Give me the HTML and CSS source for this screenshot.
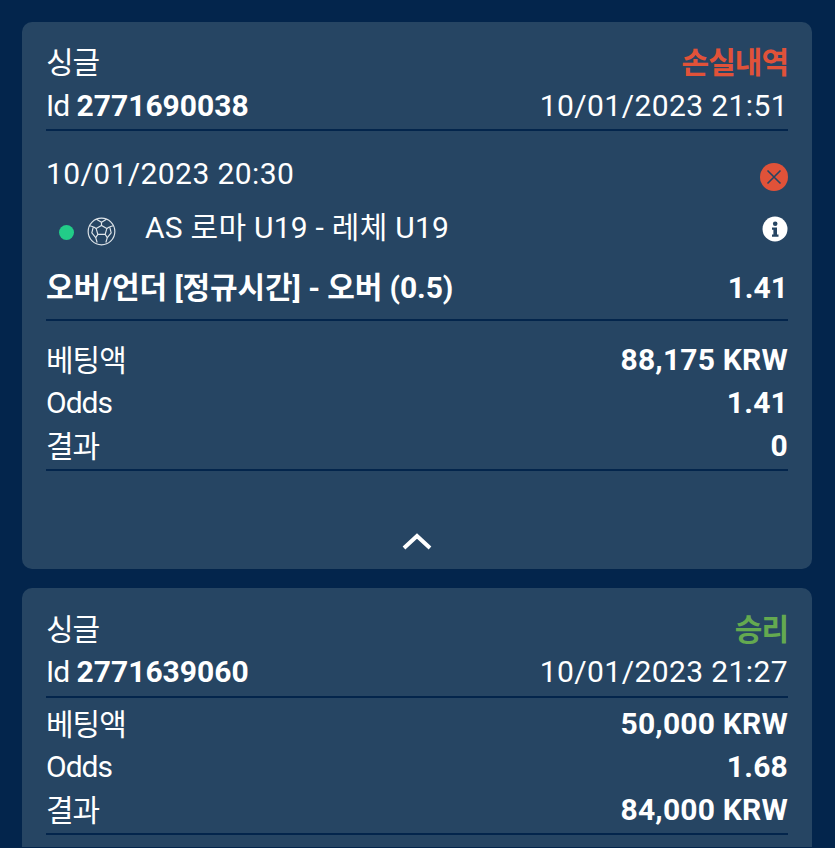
FILE: index.html
```html
<!DOCTYPE html>
<html lang="ko">
<head>
  <meta charset="UTF-8">
  <meta name="viewport" content="width=device-width, initial-scale=1.0">
  <title>Bets</title>
  <link rel="stylesheet" href="styles.css">
</head>
<body>
<div class="card">
  <div class="row head-row top">
    <span class="ko">싱글</span>
    <strong class="lost ko">손실내역</strong>
  </div>
  <div class="row head-row">
    <span><span class="tight">Id</span> <strong>2771690038</strong></span>
    <span class="date">10/01/2023 21:51</span>
  </div>
  <div class="line"></div>

  <div class="row event-date">
    <span class="date">10/01/2023 20:30</span>
    <svg class="icon-x" width="28" height="28" viewBox="0 0 28 28">
      <circle cx="14" cy="14" r="14" fill="#e05239"/>
      <path d="M7.5 7.5l13 13M20.5 7.5l-13 13" stroke="#264563" stroke-width="1.6" fill="none"/>
    </svg>
  </div>
  <div class="row event-match">
    <div class="match-left">
      <span class="dot"></span>
      <svg class="ball" width="29" height="29" viewBox="0 0 30 30" fill="none" stroke="#dfe5ea" stroke-width="1.2">
        <circle cx="15" cy="15" r="13.8"/>
        <path d="M9.500 12l5.500-3.300 5.500 3.300-1.700 6h-7.600z"/>
        <path d="M15 8.700V5.500M20.500 12l3-1.900M18.800 18l2.200 3.400M11.200 18L9 21.400M9.500 12l-3-1.900"/>
        <path d="M9.800 2.300L15 5.500l5.200-3.200M23.500 10.100l3.700-1.100M23.500 10.100l1.500 6.400-4 4.900M21 21.400l-1.500 5M9 21.400l1.500 5M9 21.400l-4-4.900 1.500-6.400M6.500 10.100L2.800 9"/>
      </svg>
      <span class="match-name">AS 로마 U19 - 레체 U19</span>
    </div>
    <svg class="icon-i" width="26" height="26" viewBox="0 0 26 26">
      <circle cx="13" cy="13" r="12.500" fill="#fff"/>
      <circle cx="13.200" cy="7.800" r="2.300" fill="#264563"/>
      <path d="M10 11.500h5v7h1.500v2.300h-6.500v-2.300h1.400v-4.700h-1.400z" fill="#264563"/>
    </svg>
  </div>
  <div class="row market">
    <strong class="market-name">오버/언더 [정규시간] - 오버 (0.5)</strong>
    <strong>1.41</strong>
  </div>
  <div class="line"></div>

  <div class="rows first">
    <div class="row stat"><span class="ko">베팅액</span><strong class="num">88,175 KRW</strong></div>
    <div class="row stat"><span class="tight">Odds</span><strong class="num">1.41</strong></div>
    <div class="row stat"><span class="ko">결과</span><strong class="num">0</strong></div>
  </div>
  <div class="line"></div>

  <div class="toggle">
    <svg width="32" height="20" viewBox="0 0 32 20" fill="none" stroke="#fff" stroke-width="4">
      <path d="M3 17L16 5l13 12"/>
    </svg>
  </div>
</div>

<div class="card last">
  <div class="row head-row top">
    <span class="ko">싱글</span>
    <strong class="won ko">승리</strong>
  </div>
  <div class="row head-row">
    <span><span class="tight">Id</span> <strong>2771639060</strong></span>
    <span class="date">10/01/2023 21:27</span>
  </div>
  <div class="line"></div>
  <div class="rows">
    <div class="row stat"><span class="ko">베팅액</span><strong class="num">50,000 KRW</strong></div>
    <div class="row stat"><span class="tight">Odds</span><strong class="num">1.68</strong></div>
    <div class="row stat"><span class="ko">결과</span><strong class="num">84,000 KRW</strong></div>
  </div>
  <div class="line"></div>
</div>
</body>
</html>
```

FILE: styles.css
```css
html, body {
  height: 100%;
  overflow: hidden;
}
body {
  margin: 0;
  padding: 22px 23px 0 22px;
  box-sizing: border-box;
  background-color: #03254c;
  color: #fff;
  font-family: Roboto, "Noto Sans CJK KR", sans-serif;
  font-size: 30px;
}
.card {
  background-color: #264563;
  border-radius: 10px;
  padding: 19px 24px 0;
  margin-bottom: 19px;
}
/* second card is cut off by the window */
.card.last {
  margin-bottom: 0;
  padding-bottom: 12px;
  border-radius: 10px 10px 0 0;
}
.row {
  display: flex;
  justify-content: space-between;
  align-items: center;
}
.head-row {
  height: 43px;
  box-sizing: border-box;
}
.head-row.top {
  padding-bottom: 6px;
}
.last .head-row.top {
  padding-bottom: 4px;
}
.line {
  height: 2px;
  background-color: #03254c;
}
.head-row + .line {
  margin-top: 2px;
}
.last .head-row + .line {
  margin-top: 3px;
}
.ko {
  letter-spacing: -1px;
}
.stat .ko {
  padding-bottom: 3px;
}
.tight {
  letter-spacing: -1px;
}
.date {
  letter-spacing: 0.4px;
}
.num {
  letter-spacing: 0.2px;
}
.lost {
  color: #e05239;
}
.won {
  color: #64a950;
}
.event-date {
  height: 28px;
  margin-top: 28px;
}
.icon-x {
  margin-top: 7px;
}
.event-match {
  height: 30px;
  margin-top: 23px;
}
.match-left {
  display: flex;
  align-items: center;
}
.dot {
  width: 15px;
  height: 15px;
  margin-top: 15px;
  margin-left: 13px;
  border-radius: 50%;
  background-color: #22cc88;
}
.ball {
  margin-top: 13px;
  margin-left: 13px;
}
.match-name {
  margin-left: 29px;
  letter-spacing: 0.25px;
}
.icon-i {
  margin-top: 7px;
}
.market {
  height: 30px;
  margin-top: 32px;
  margin-bottom: 17px;
}
.market-name {
  margin-bottom: 4px;
  letter-spacing: -0.1px;
}
.rows {
  padding-top: 4px;
  padding-bottom: 2px;
}
.rows.first {
  padding-top: 17px;
}
.stat {
  height: 43px;
}
.toggle {
  display: flex;
  justify-content: center;
  height: 98px;
  padding-top: 60px;
  box-sizing: border-box;
}
```
